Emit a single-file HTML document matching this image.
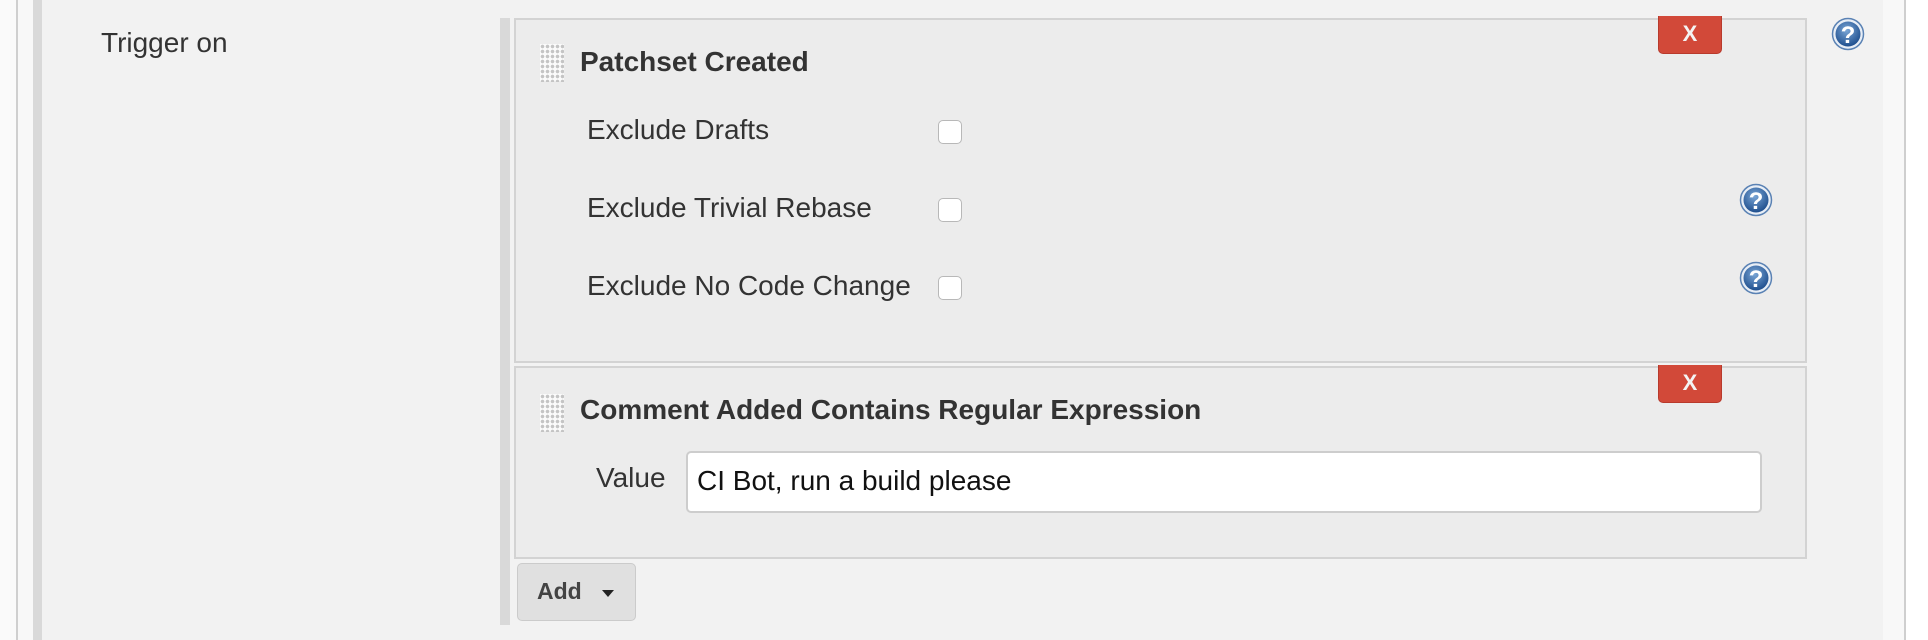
<!DOCTYPE html>
<html><head><style>
html,body{margin:0;padding:0;width:1928px;height:640px;overflow:hidden;background:#fff;font-family:"Liberation Sans",Arial,sans-serif;}
.a{position:absolute;}
.t{color:#333;font-size:28px;white-space:nowrap;line-height:1;}
.b{font-weight:bold;}
.cb{position:absolute;width:22px;height:22px;border:1px solid #b8b8b8;border-radius:5px;background:#fff;left:938px;}
.x{position:absolute;left:1658px;width:64px;height:38px;background:#d24939;border:1px solid #b83a2c;border-top:none;border-radius:0 0 5px 5px;color:#f4f4f4;font-weight:bold;font-size:22px;text-align:center;line-height:36px;box-sizing:border-box;}
.grip{position:absolute;width:24px;height:38px;background-color:#fbfbfb;background-image:radial-gradient(circle,#c4c4c4 1.6px,transparent 2px);background-size:5px 5px;}
.panel{position:absolute;left:514px;width:1293px;background:#ececec;border:2px solid #d3d3d3;box-sizing:border-box;}
</style></head><body>
<div class="a" style="left:0;top:0;width:17px;height:640px;background:#fafafa"></div>
<div class="a" style="left:16px;top:0;width:2px;height:640px;background:#cfcfcf"></div>
<div class="a" style="left:18px;top:0;width:15px;height:640px;background:#f8f8f8"></div>
<div class="a" style="left:33px;top:0;width:9px;height:640px;background:#d9d9d9"></div>
<div class="a" style="left:42px;top:0;width:1841px;height:640px;background:#f2f2f2"></div>
<div class="a" style="left:1883px;top:0;width:21px;height:640px;background:#f8f8f8"></div>
<div class="a" style="left:1904px;top:0;width:2px;height:640px;background:#cfcfcf"></div>

<div class="a t" style="left:101px;top:29px;">Trigger on</div>
<div class="a" style="left:500px;top:18px;width:10px;height:607px;background:#d9d9d9"></div>

<div class="panel" style="top:18px;height:345px;"></div>
<div class="grip" style="left:540px;top:44px;"></div>
<div class="a t b" style="left:580px;top:48px;">Patchset Created</div>
<div class="a t" style="left:587px;top:116px;">Exclude Drafts</div>
<div class="a t" style="left:587px;top:194px;">Exclude Trivial Rebase</div>
<div class="a t" style="left:587px;top:272px;">Exclude No Code Change</div>
<div class="cb" style="top:120px"></div>
<div class="cb" style="top:198px"></div>
<div class="cb" style="top:276px"></div>
<div class="x" style="top:16px">X</div>

<div class="panel" style="top:366px;height:193px;"></div>
<div class="grip" style="left:540px;top:394px;"></div>
<div class="a t b" style="left:580px;top:396px;">Comment Added Contains Regular Expression</div>
<div class="x" style="top:365px">X</div>
<div class="a t" style="left:596px;top:464px;">Value</div>
<div class="a" style="left:686px;top:451px;width:1076px;height:62px;background:#fff;border:2px solid #cdcdcd;border-radius:5px;box-sizing:border-box;"></div>
<div class="a" style="left:697px;top:467px;font-size:28px;color:#111;line-height:1;white-space:nowrap">CI Bot, run a build please</div>

<div class="a" style="left:517px;top:563px;width:119px;height:58px;background:#e0e0e0;border:1px solid #cbcbcb;border-radius:5px;box-sizing:border-box;"></div>
<div class="a b" style="left:537px;top:580px;font-size:23px;color:#444;line-height:1">Add</div>
<div class="a" style="left:602px;top:590px;width:0;height:0;border-left:6px solid transparent;border-right:6px solid transparent;border-top:7px solid #222;"></div>

<svg class="a" style="left:0;top:0" width="1928" height="640">
<defs><radialGradient id="g" cx="45%" cy="35%" r="65%"><stop offset="0" stop-color="#7aa6d6"/><stop offset="1" stop-color="#1f4f8e"/></radialGradient></defs>
<g>
<circle cx="1848" cy="34" r="15.5" fill="#e8eef6" stroke="#5a82b4" stroke-width="1.5"/><circle cx="1848" cy="34" r="12.5" fill="url(#g)"/>
<text x="1848" y="43" text-anchor="middle" font-family="Liberation Sans" font-weight="bold" font-size="24" fill="#fff">?</text>
<circle cx="1756" cy="200" r="15.5" fill="#e8eef6" stroke="#5a82b4" stroke-width="1.5"/><circle cx="1756" cy="200" r="12.5" fill="url(#g)"/>
<text x="1756" y="209" text-anchor="middle" font-family="Liberation Sans" font-weight="bold" font-size="24" fill="#fff">?</text>
<circle cx="1756" cy="278" r="15.5" fill="#e8eef6" stroke="#5a82b4" stroke-width="1.5"/><circle cx="1756" cy="278" r="12.5" fill="url(#g)"/>
<text x="1756" y="287" text-anchor="middle" font-family="Liberation Sans" font-weight="bold" font-size="24" fill="#fff">?</text>
</g>
</svg>
</body></html>
